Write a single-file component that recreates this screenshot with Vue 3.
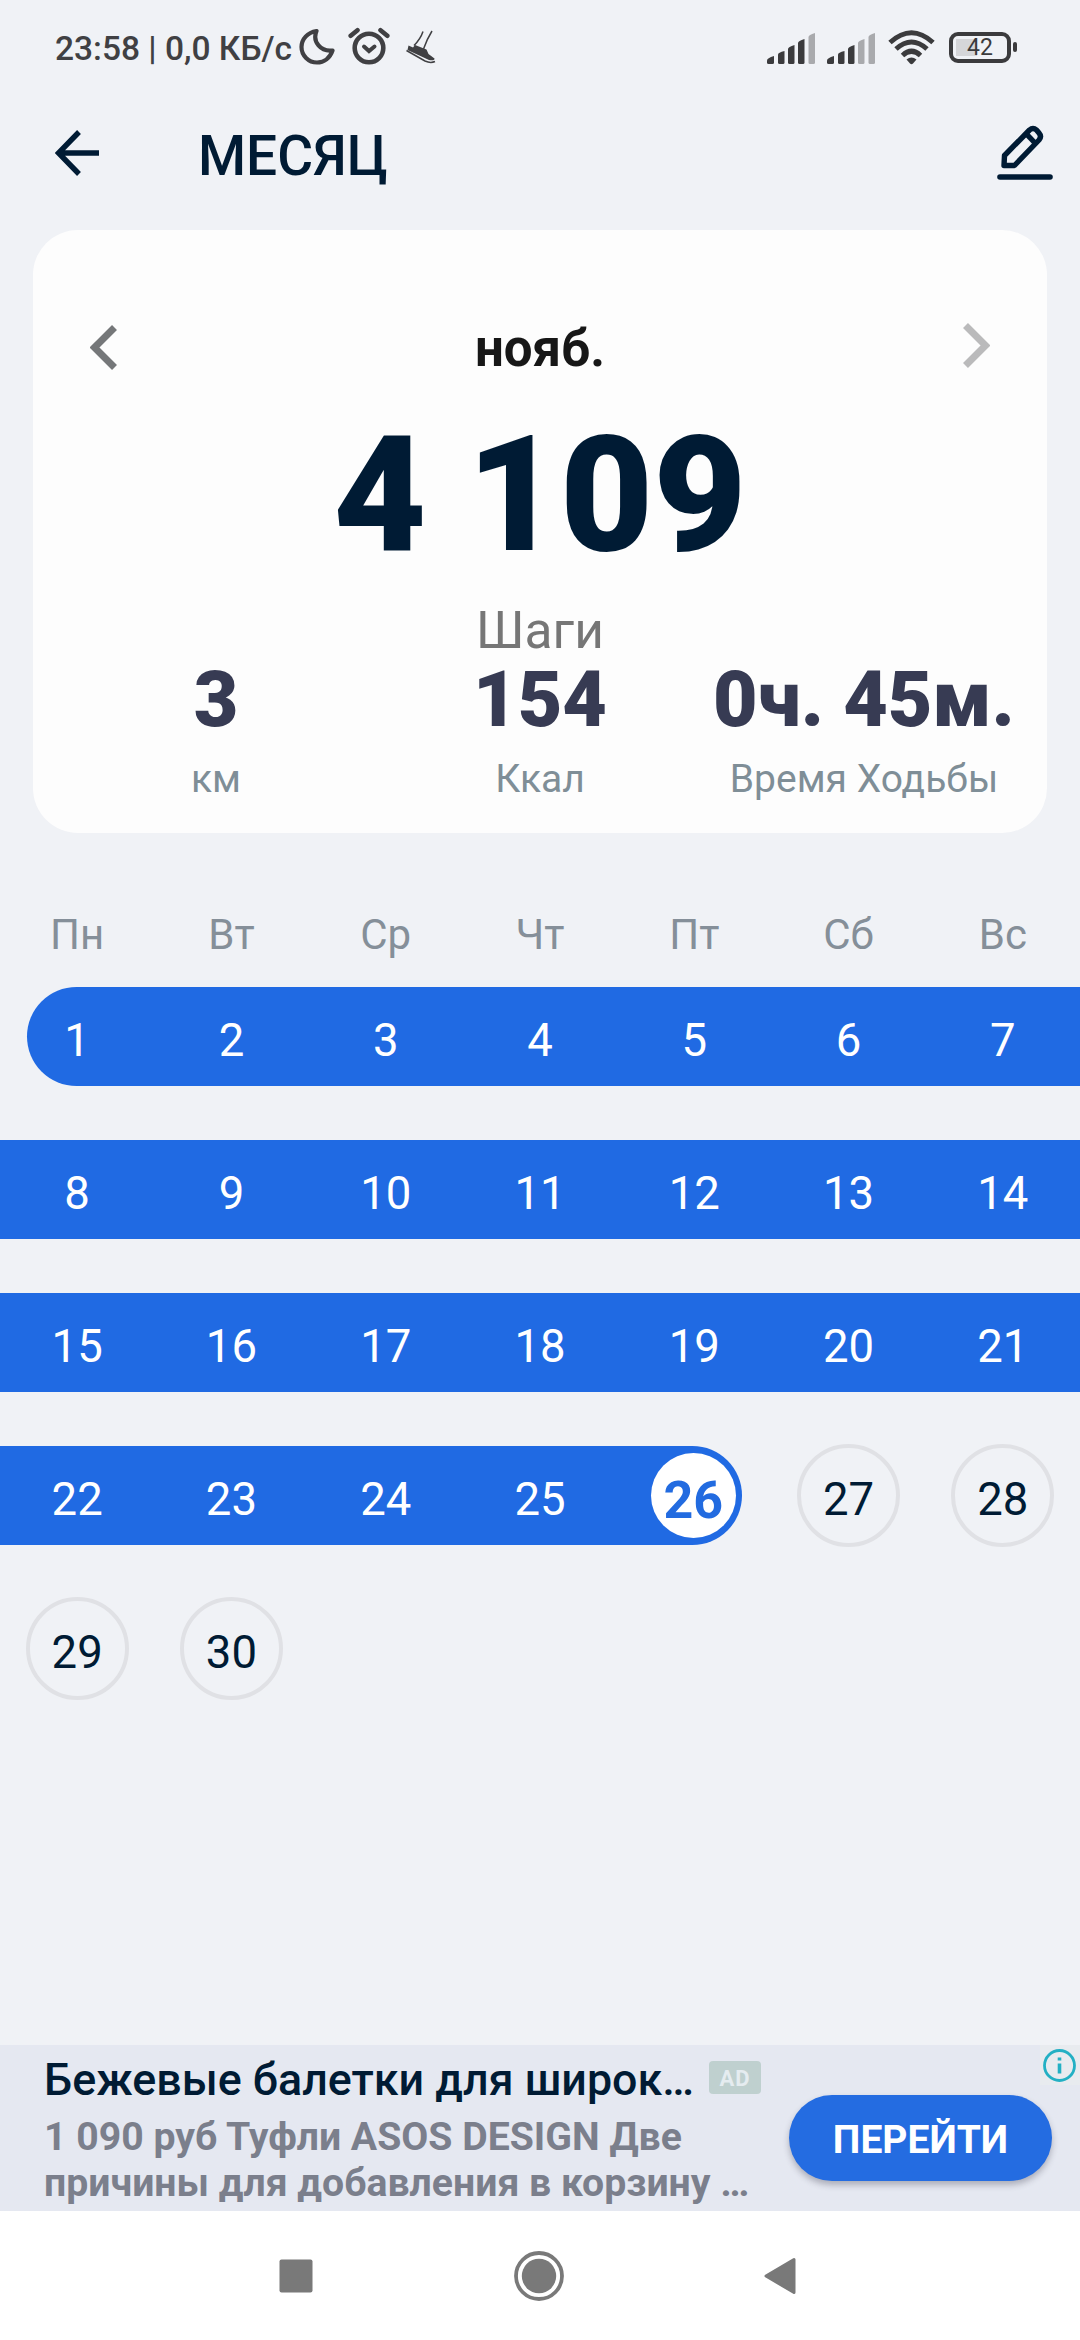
<script setup>
const weekdays = ['Пн', 'Вт', 'Ср', 'Чт', 'Пт', 'Сб', 'Вс']
const today = 26
const daysInMonth = 30
const days = Array.from({ length: daysInMonth }, (_, i) => i + 1)

function dayClass(day) {
  return {
    passed: day <= today,
    first: day === 1,
    today: day === today,
    upcoming: day > today,
  }
}

const stats = [
  { value: '3', label: 'км' },
  { value: '154', label: 'Ккал' },
  { value: '0ч. 45м.', label: 'Время Ходьбы' },
]

const barPaths = [
  'M0 29.500V27.500Q0 25 7 23V29.500Q7 31 5.500 31H1.500Q0 31 0 29.500Z',
  'M11 29.500V21.500Q11 19.500 17.500 18V29.500Q17.500 31 16 31H12.500Q11 31 11 29.500Z',
  'M21 29.500V16Q21 14 27.500 12V29.500Q27.500 31 26 31H22.500Q21 31 21 29.500Z',
  'M31 29.500V10Q31 8 37.500 6V29.500Q37.500 31 36 31H32.500Q31 31 31 29.500Z',
  'M41.500 29.500V4Q41.500 2 48 0V29.500Q48 31 46.500 31H43Q41.500 31 41.500 29.500Z',
]
const signals = [4, 3]
</script>

<template>
  <div class="screen">
    <header class="status">
      <span class="clock">23:58 | 0,0 КБ/с</span>
      <svg class="moon" width="36" height="38" viewBox="0 0 36 38">
        <path d="M17.500 3C8.500 4.500 2.500 11 2.500 19C2.500 27.500 9.500 34.500 18 34.500C25 34.500 31 30 33.500 22.500C22 24 13 14 17.500 3Z" fill="none" stroke="#404043" stroke-width="4.200" stroke-linejoin="round" />
      </svg>
      <svg class="alarm" width="42" height="38" viewBox="0 0 42 38">
        <g fill="none" stroke="#404043" stroke-width="4.600" stroke-linecap="round">
          <circle cx="21" cy="21" r="14.300" />
          <path d="M16 19.500L21 24L26.500 19.500" stroke-width="4" />
          <path d="M2.700 8.800L9.500 3.200M32.500 3.200L39.300 8.800" />
        </g>
      </svg>
      <svg class="shoe" width="30" height="34" viewBox="0 0 30 34">
        <path d="M17 1.500Q14.500 9 8 15.500M26 1Q21 9 17.500 19" fill="none" stroke="#404043" stroke-width="1.500" />
        <path d="M2.500 15.500L7 17.500L9 15L20.500 19.500L22.500 24L28.500 28.500Q29 31 23 30L1.500 20Z" fill="#404043" />
        <path d="M0.500 20.500L19 31Q24.500 33.500 29 31.500" fill="none" stroke="#404043" stroke-width="1.500" />
      </svg>
      <span class="grow"></span>
      <svg v-for="level in signals" :key="level" class="signal" width="48" height="31" viewBox="0 0 48 31">
        <path v-for="(d, i) in barPaths" :key="i" :d="d" :fill="i < level ? '#3b3b3d' : '#a9aaad'" />
      </svg>
      <svg class="wifi" width="47" height="35" viewBox="0 0 47 35">
        <g fill="none" stroke="#3b3b3d" stroke-width="5">
          <path d="M2 12.500Q23.500 -7 45 12.500" />
          <path d="M8 19Q23.500 5 39 19" />
          <path d="M14.500 25.500Q23.500 17 32.500 25.500" />
        </g>
        <path d="M18.500 29.500Q23.500 25.500 28.500 29.500L25 33.500Q23.500 35 22 33.500Z" fill="#3b3b3d" />
      </svg>
      <span class="battery"><span class="charge"></span><span class="percent">42</span></span>
      <span class="nub"></span>
    </header>

    <div class="toolbar">
      <svg class="back" width="45" height="46" viewBox="0 0 45 46">
        <path d="M24 2L3.500 23L24 44M3.500 23H44" fill="none" stroke="#001b34" stroke-width="5.400" />
      </svg>
      <h1>МЕСЯЦ</h1>
      <svg class="edit" width="58" height="58" viewBox="0 0 58 58">
        <g fill="none" stroke="#001b34" stroke-width="5.400" stroke-linejoin="round">
          <path d="M8.500 31.500L33.500 6Q37 3 40.500 6L43 9Q46 12.500 43 16L18.500 41.500H8Z" />
          <path d="M30 9.500L39 19" />
          <path d="M4 53H54" stroke-width="5.600" stroke-linecap="round" />
        </g>
      </svg>
    </div>

    <section class="card">
      <div class="month">
        <svg class="prev" width="27" height="45" viewBox="0 0 27 45">
          <path d="M24.500 2.500L4.500 22.500L24.500 42.500" fill="none" stroke="#757779" stroke-width="7" />
        </svg>
        <span>нояб.</span>
        <svg class="next" width="27" height="45" viewBox="0 0 27 45">
          <path d="M2.500 2.500L22.500 22.500L2.500 42.500" fill="none" stroke="#bababb" stroke-width="7" />
        </svg>
      </div>
      <div class="total">4 109</div>
      <div class="unit">Шаги</div>
      <div class="stats">
        <div v-for="s in stats" :key="s.label" class="stat">
          <strong>{{ s.value }}</strong>
          <span>{{ s.label }}</span>
        </div>
      </div>
    </section>

    <div class="weekdays">
      <span v-for="d in weekdays" :key="d">{{ d }}</span>
    </div>
    <div class="days">
      <div v-for="day in days" :key="day" class="day" :class="dayClass(day)">
        <span>{{ day }}</span>
      </div>
    </div>

    <aside class="ad">
      <div class="copy">
        <div class="headline"><b>Бежевые балетки для широк…</b><i>AD</i></div>
        <p>1 090 руб Туфли ASOS DESIGN Две<br />причины для добавления в корзину …</p>
      </div>
      <button>ПЕРЕЙТИ</button>
      <svg class="info" width="40" height="40" viewBox="0 0 40 40">
        <rect width="40" height="40" fill="#e8ebef" />
        <circle cx="19.500" cy="20.500" r="15" fill="none" stroke="#23b0c4" stroke-width="2.800" />
        <path d="M19.500 18.500V28.500M19.500 12.500V15.500" stroke="#23b0c4" stroke-width="3.600" />
      </svg>
    </aside>

    <nav class="nav">
      <svg width="34" height="34" viewBox="0 0 34 34"><rect x="0.500" y="0.500" width="33" height="33" rx="2" fill="#797979" /></svg>
      <svg width="52" height="52" viewBox="0 0 52 52">
        <circle cx="26" cy="26" r="23" fill="none" stroke="#797979" stroke-width="3.800" />
        <circle cx="26" cy="26" r="17.200" fill="#797979" />
      </svg>
      <svg width="32" height="38" viewBox="0 0 32 38"><path d="M2 19L30 2.500V35.500Z" fill="#797979" stroke="#797979" stroke-width="3" stroke-linejoin="round" /></svg>
    </nav>
  </div>
</template>

<style>
body {
  margin: 0;
  background: #f0f2f6;
}
</style>

<style scoped>
.screen {
  width: 1080px;
  height: 2340px;
  display: flex;
  flex-direction: column;
  overflow: hidden;
  background: #f0f2f6;
  color: #001b34;
  font-family: Roboto, "Noto Sans", sans-serif;
}
svg {
  display: block;
  flex: none;
}
.grow {
  flex: 1;
}
.status {
  height: 97px;
  box-sizing: border-box;
  padding: 0 63px 0 55px;
  display: flex;
  align-items: center;
  color: #404043;
  white-space: nowrap;
}
.clock {
  width: 244px;
  font-size: 33.5px;
  line-height: 40px;
  font-weight: 500;
}
.moon {
  margin-bottom: 3px;
}
.alarm {
  margin: 0 0 5px 13px;
}
.shoe {
  margin: 0 0 3px 16px;
}
.signal {
  margin: 0 12px 1px 0;
}
.wifi {
  margin: 0 14px 2px 1px;
}
.battery {
  position: relative;
  width: 62px;
  height: 31px;
  margin-bottom: 3px;
  box-sizing: border-box;
  border: 4px solid #3b3b3d;
  border-radius: 9px;
  text-align: center;
  line-height: 24px;
  font-size: 23px;
  color: #3b3b3d;
}
.charge {
  position: absolute;
  left: 3px;
  top: 3px;
  width: 21px;
  height: 17px;
  background: #d5d6d9;
}
.percent {
  position: relative;
}
.nub {
  width: 4px;
  height: 10px;
  margin: 0 0 3px 2px;
  border-radius: 2px;
  background: #3b3b3d;
}
.toolbar {
  height: 118px;
  box-sizing: border-box;
  padding: 0 26px 0 55px;
  margin-bottom: 15px;
  display: flex;
  align-items: center;
}
.back {
  margin-bottom: 6px;
}
h1 {
  flex: 1;
  margin: 0 0 0 98px;
  font-size: 55px;
  line-height: 66px;
  font-weight: 500;
}
.edit {
  margin-bottom: 6px;
}
.card {
  height: 603px;
  box-sizing: border-box;
  margin: 0 33px;
  padding-top: 79px;
  border-radius: 45px;
  background: #fdfdfd;
  text-align: center;
}
.month {
  height: 80px;
  padding: 0 57px;
  display: flex;
  align-items: center;
  justify-content: space-between;
  font-size: 51px;
  font-weight: 700;
  color: #171717;
}
.month span {
  margin-bottom: 1px;
}
.prev {
  margin-bottom: 4px;
}
.next {
  margin-bottom: 8px;
}
.total {
  margin-top: 25px;
  font-size: 161px;
  line-height: 162px;
  font-weight: 900;
}
.unit {
  margin: 25px 0 -1px;
  font-size: 51.5px;
  line-height: 60px;
  color: #767676;
}
.stats {
  display: flex;
  padding: 0 21px;
}
.stat {
  flex: 1 1 0;
  display: flex;
  flex-direction: column;
  align-items: center;
  white-space: nowrap;
}
.stat strong {
  font-size: 77px;
  line-height: 80px;
  font-weight: 900;
  color: #373b53;
}
.stat span {
  margin-top: 15px;
  font-size: 39px;
  line-height: 48px;
  color: #7f8e97;
}
.weekdays {
  margin: 77px 0 27px;
  display: grid;
  grid-template-columns: repeat(7, 1fr);
  text-align: center;
  font-size: 42px;
  line-height: 50px;
  color: #858f99;
}
.days {
  flex: 1;
  display: grid;
  grid-template-columns: repeat(7, 1fr);
  grid-auto-rows: 99px;
  align-content: start;
  row-gap: 54px;
}
.day {
  display: flex;
  align-items: center;
  justify-content: center;
  font-size: 45.5px;
  line-height: 54px;
}
.day > span {
  padding-top: 8px;
}
.passed {
  background: #206ae3;
  color: #fff;
}
.first {
  margin-left: 27px;
  padding-right: 27px;
  border-radius: 50px 0 0 50px;
}
.today {
  margin-right: 29px;
  border-radius: 0 50px 50px 0;
}
.today > span {
  flex: none;
  width: 85px;
  height: 85px;
  box-sizing: border-box;
  margin-left: 27px;
  padding-top: 4px;
  border-radius: 50%;
  background: #fff;
  color: #226be0;
  text-align: center;
  font-size: 52px;
  line-height: 88px;
  font-weight: 700;
}
.upcoming > span {
  flex: none;
  width: 103px;
  height: 103px;
  box-sizing: border-box;
  padding-top: 4px;
  border: 4px solid #e0e1e5;
  border-radius: 50%;
  text-align: center;
  line-height: 95px;
}
.ad {
  position: relative;
  height: 166px;
  display: flex;
  background: #e5e8f1;
}
.copy {
  width: 789px;
  box-sizing: border-box;
  padding: 7px 0 0 44px;
  white-space: nowrap;
}
.headline {
  display: flex;
  align-items: center;
  height: 54px;
}
.headline b {
  width: 665px;
  font-size: 44.8px;
  font-weight: 500;
}
.headline i {
  width: 52px;
  height: 33px;
  margin-bottom: 3px;
  border-radius: 4px;
  background: #bfd0cf;
  color: #e5ecf0;
  font-size: 22px;
  line-height: 35px;
  font-style: normal;
  font-weight: 700;
  text-align: center;
  letter-spacing: 1px;
}
.copy p {
  margin: 8px 0 0;
  font-size: 39.2px;
  line-height: 46px;
  font-weight: 700;
  color: #7b7f8c;
}
button {
  width: 263px;
  height: 86px;
  margin-top: 50px;
  padding: 4px 0 0;
  border: 0;
  border-radius: 43px;
  background: #246ce1;
  box-shadow: 0 4px 6px rgba(40, 40, 60, 0.3);
  color: #fff;
  font: 700 39px/48px Roboto, "Noto Sans", sans-serif;
}
.info {
  position: absolute;
  top: 0;
  right: 0;
}
.nav {
  height: 129px;
  box-sizing: border-box;
  padding: 0 284px 0 279px;
  display: flex;
  align-items: center;
  justify-content: space-between;
  background: #fff;
}
</style>
